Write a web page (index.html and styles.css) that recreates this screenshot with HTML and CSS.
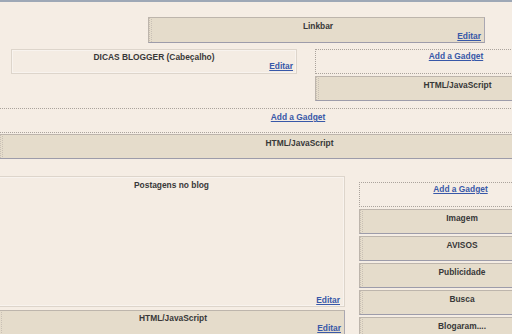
FILE: index.html
```
<!DOCTYPE html>
<html>
<head>
<meta charset="utf-8">
<link rel="stylesheet" href="styles.css">
</head>
<body>
<div class="topline"></div>
<div class="page">
  <div class="linkbar-row">
    <div class="widget linkbar">
      <div class="title">Linkbar</div>
      <div class="edit"><a href="#">Editar</a></div>
    </div>
  </div>

  <div class="header-row">
    <div class="locked header">
      <div class="title">DICAS BLOGGER (Cabeçalho)</div>
      <div class="edit"><a href="#">Editar</a></div>
    </div>
    <div class="section header-side">
      <div class="add"><a href="#">Add a Gadget</a></div>
      <div class="widget"><div class="title">HTML/JavaScript</div></div>
    </div>
  </div>

  <div class="section crossbar">
    <div class="add add-cross"><a href="#">Add a Gadget</a></div>
    <div class="widget"><div class="title">HTML/JavaScript</div></div>
  </div>

  <div class="main-row">
    <div class="main">
      <div class="locked posts">
        <div class="title">Postagens no blog</div>
        <div class="edit"><a href="#">Editar</a></div>
      </div>
      <div class="widget bottom-widget">
        <div class="title">HTML/JavaScript</div>
        <div class="edit"><a href="#">Editar</a></div>
      </div>
    </div>
    <div class="section sidebar">
      <div class="add"><a href="#">Add a Gadget</a></div>
      <div class="widget"><div class="title">Imagem</div></div>
      <div class="widget"><div class="title">AVISOS</div></div>
      <div class="widget"><div class="title">Publicidade</div></div>
      <div class="widget"><div class="title">Busca</div></div>
      <div class="widget"><div class="title">Blogaram....</div></div>
    </div>
  </div>
</div>
</body>
</html>
```

FILE: styles.css
```
html, body {
  margin: 0;
  padding: 0;
}
body {
  background: #f5ede4;
  overflow: hidden;
  width: 512px;
  height: 334px;
  font-family: "Liberation Sans", Arial, sans-serif;
  font-size: 8.4px;
  font-weight: bold;
  color: #383838;
}
a {
  color: #3858a8;
  text-decoration: underline;
}
.topline {
  height: 2px;
  background: #9ea8b6;
}
.page {
  width: 597px;
}
.title {
  line-height: 10px;
  text-align: center;
}
.edit {
  line-height: 10px;
  text-align: right;
}

/* tan gadget boxes */
.widget {
  position: relative;
  box-sizing: border-box;
  height: 25px;
  margin-top: 2px;
  padding: 3px 3px 0 6px;
  background: #e5dccb;
  border: 1px solid #bdb5ac;
  border-right-color: #a9a7b2;
  border-bottom-color: #9d9caa;
}
.widget::before {
  content: "";
  position: absolute;
  left: 0;
  top: 0;
  bottom: 0;
  width: 3px;
  background:
    repeating-linear-gradient(to bottom, #c9c0b5 0 1px, transparent 1px 2px) left top / 1px 100% no-repeat,
    repeating-linear-gradient(to bottom, transparent 0 1px, #c9c0b5 1px 2px) 2px top / 1px 100% no-repeat;
}

/* locked (light) boxes */
.locked {
  box-sizing: border-box;
  border: 1px solid #ddd5cb;
  box-shadow: inset 0 0 0 1px #f8f3ee;
  background: #f4ece3;
}

/* dashed "Add a Gadget" areas */
.add {
  box-sizing: border-box;
  height: 25px;
  border: 1px dotted #aaa39c;
  text-align: center;
  line-height: 10px;
  padding-top: 1px;
}

.linkbar-row {
  padding-top: 15px;
  padding-left: 148px;
}
.linkbar {
  width: 337px;
  height: 26px;
  margin-top: 0;
  padding-top: 3px;
}

.header-row {
  display: flex;
  margin-top: 6px;
}
.header {
  margin-left: 11px;
  width: 286px;
  height: 25px;
  padding: 3px 3px 0;
}
.header .title {
  line-height: 9px;
}
.header .edit {
  line-height: 9px;
}
.header-side {
  margin-left: 18px;
  width: 282px;
}

.crossbar {
  margin-top: 7px;
  margin-left: -1px;
  width: 598px;
}
.add-cross {
  padding-top: 3px;
}
.crossbar .widget {
  margin-top: 1px;
}

.main-row {
  display: flex;
  align-items: flex-start;
  margin-top: 17px;
}
.main {
  margin-left: -2px;
  width: 347px;
}
.posts {
  height: 131px;
  display: flex;
  flex-direction: column;
  justify-content: space-between;
  padding: 3px 4px 1px 4px;
}
.bottom-widget {
  margin-top: 3px;
  height: 30px;
  padding-top: 2px;
}
.sidebar {
  margin-left: 14px;
  margin-top: 6px;
  width: 203px;
}
.sidebar .add {
  padding-top: 1px;
}
```
